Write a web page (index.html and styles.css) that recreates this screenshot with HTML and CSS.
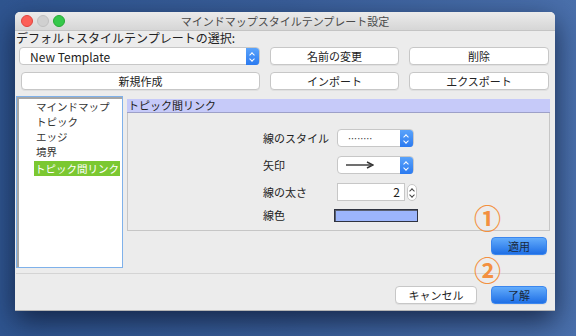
FILE: index.html
```html
<!DOCTYPE html>
<html lang="ja">
  <head>
    <meta charset="UTF-8" />
    <title>マインドマップスタイルテンプレート設定</title>
    <link rel="stylesheet" href="styles.css">
  </head>
  <body>
    <div class="window">
      <div class="titlebar">
        <div class="lights">
          <span class="light red"></span>
          <span class="light gray"></span>
          <span class="light green"></span>
        </div>
        <div class="title">マインドマップスタイルテンプレート設定</div>
        <div></div>
      </div>

      <div class="content">
        <div class="select-label">デフォルトスタイルテンプレートの選択:</div>

        <div class="toolbar">
          <div class="combo wide">
            <span class="combo-text">New Template</span>
            <span class="stepper blue"></span>
          </div>
          <button class="btn">名前の変更</button>
          <button class="btn">削除</button>
          <button class="btn new-btn">新規作成</button>
          <button class="btn">インポート</button>
          <button class="btn">エクスポート</button>
        </div>

        <div class="main">
          <ul class="tree">
            <li>マインドマップ</li>
            <li>トピック</li>
            <li>エッジ</li>
            <li>境界</li>
            <li class="selected">トピック間リンク</li>
          </ul>

          <div class="right">
            <div class="panel-head">トピック間リンク</div>
            <div class="panel">
              <div class="form">
                <div class="row">
                  <label>線のスタイル</label>
                  <div class="combo small">
                    <span class="dots">········</span>
                    <span class="stepper blue"></span>
                  </div>
                </div>
                <div class="row">
                  <label>矢印</label>
                  <div class="combo small">
                    <span class="arrow">
                      <svg width="28" height="8" viewBox="0 0 28 8">
                        <path d="M0 4 H25" stroke="#333" stroke-width="1.4" />
                        <path d="M21 1 L27 4 L21 7" fill="none" stroke="#333" stroke-width="1.4" />
                      </svg>
                    </span>
                    <span class="stepper blue"></span>
                  </div>
                </div>
                <div class="row">
                  <label>線の太さ</label>
                  <div class="spinner">
                    <span class="spin-field">2</span>
                    <span class="stepper white"></span>
                  </div>
                </div>
                <div class="row color-row">
                  <label>線色</label>
                  <span class="swatch"></span>
                </div>
              </div>
            </div>
            <div class="apply-row">
              <button class="btn primary">適用</button>
            </div>
          </div>
        </div>

        <div class="footer">
          <button class="btn cancel">キャンセル</button>
          <button class="btn primary">了解</button>
        </div>
      </div>

      <span class="mark mark-1">①</span>
      <span class="mark mark-2">②</span>
    </div>
  </body>
</html>
```

FILE: styles.css
```css
* {
  margin: 0;
  padding: 0;
  box-sizing: border-box;
}

body {
  font-family: "Noto Sans CJK JP", "Noto Sans", sans-serif;
  font-size: 12px;
  color: #222;
  width: 576px;
  height: 336px;
  overflow: hidden;
  background: linear-gradient(90deg, #2f5590 0%, #3a5f9a 50%, #4a70ac 100%);
}

.window {
  position: relative;
  margin: 12px 0 0 15px;
  width: 540px;
  height: 299px;
  background: #ececec;
  border-radius: 5px 5px 0 0;
  box-shadow: 0 10px 28px rgba(10, 20, 45, 0.75);
  border-bottom: 1px solid #b5b5b5;
}

/* title bar */
.titlebar {
  display: grid;
  grid-template-columns: 1fr auto 1fr;
  align-items: center;
  height: 19px;
  background: linear-gradient(#ebebeb, #d6d6d6);
  border-bottom: 1px solid #c4c4c4;
  border-radius: 5px 5px 0 0;
}

.lights {
  display: flex;
  gap: 4px;
  padding-left: 6px;
}

.light {
  width: 12px;
  height: 12px;
  border-radius: 50%;
}

.red {
  background: #fc5f57;
  border: 1px solid #e0443e;
}

.gray {
  background: #d0d0d0;
  border: 1px solid #c0c0c0;
}

.green {
  background: #35c84a;
  border: 1px solid #27aa35;
}

.title {
  font-size: 11px;
  color: #4a4a4a;
}

/* content */
.content {
  padding: 0 0 0 1px;
}

.select-label {
  height: 15px;
  line-height: 14px;
  font-size: 12px;
  color: #222;
}

.toolbar {
  display: grid;
  grid-template-columns: 241px 129px 140px;
  grid-template-rows: 18px 18px;
  column-gap: 10px;
  row-gap: 7px;
  margin: 1px 0 0 3px;
}

.btn {
  font-family: inherit;
  font-size: 11px;
  color: #222;
  background: #fff;
  border: 1px solid #c7c7c7;
  border-radius: 4px;
  box-shadow: 0 1px 0 rgba(0, 0, 0, 0.05);
  line-height: 16px;
}

.new-btn {
  margin-left: 2px;
}

.combo {
  display: flex;
  align-items: center;
  justify-content: space-between;
  background: #fff;
  border: 1px solid #c7c7c7;
  border-radius: 4px;
  height: 18px;
}

.combo-text {
  padding-left: 10px;
  font-size: 12px;
  color: #222;
}

.stepper {
  position: relative;
  width: 13px;
  height: 17px;
  border-radius: 0 3px 3px 0;
}

.stepper.blue {
  background: linear-gradient(#5aa3fb, #2b7af0);
}

.stepper::before,
.stepper::after {
  content: "";
  position: absolute;
  left: 4px;
  width: 3px;
  height: 3px;
  border-left: 1px solid #fff;
  border-top: 1px solid #fff;
}

.stepper::before {
  top: 5px;
  transform: rotate(45deg);
}

.stepper::after {
  top: 9px;
  transform: rotate(-135deg);
}

.stepper.white {
  width: 10px;
  height: 17px;
  background: #fff;
  border: 1px solid #c7c7c7;
  border-radius: 5px;
}

.stepper.white::before,
.stepper.white::after {
  left: 2px;
  border-color: #444;
}

.stepper.white::before {
  top: 4px;
}

.stepper.white::after {
  top: 8px;
}

/* main area */
.main {
  display: flex;
  gap: 4px;
  margin-top: 6px;
  height: 172px;
}

.tree {
  list-style: none;
  width: 107px;
  height: 172px;
  background: #fff;
  border: 1px solid #7fb1ea;
  box-shadow: inset 2px 2px 0 #a6a6a6;
  padding: 2px 0 0 17px;
  white-space: nowrap;
}

.tree li {
  height: 15px;
  line-height: 15px;
  font-size: 10.5px;
  color: #333;
  padding-left: 2px;
}

.tree li.selected {
  display: inline-block;
  background: #7bc831;
  color: #fff;
  padding: 0 1px;
}

.right {
  width: 423px;
  padding-top: 3px;
}

.panel-head {
  height: 14px;
  line-height: 13px;
  background: #c6caf9;
  border-bottom: 1px solid #9da0c8;
  font-size: 11px;
  color: #222;
  padding-left: 1px;
}

.panel {
  height: 118px;
  border: 1px solid #c6c6c6;
  border-top: none;
  padding: 16px 0 0 135px;
}

.form {
  display: flex;
  flex-direction: column;
  gap: 9px;
}

.row {
  display: flex;
  align-items: center;
  height: 18px;
}

.row label {
  width: 74px;
  font-size: 11px;
  color: #222;
}

.combo.small {
  width: 77px;
}

.dots {
  padding-left: 9px;
  font-size: 9px;
  letter-spacing: -2px;
  color: #333;
}

.arrow {
  display: flex;
  padding-left: 8px;
}

.spinner {
  display: flex;
  align-items: center;
  gap: 2px;
}

.spin-field {
  width: 68px;
  height: 18px;
  background: #fff;
  border: 1px solid #c7c7c7;
  text-align: right;
  padding-right: 4px;
  line-height: 16px;
  font-size: 12px;
}

.color-row {
  margin-top: -4px;
}

.color-row label {
  width: 71px;
}

.swatch {
  width: 84px;
  height: 13px;
  background: #9cb5fb;
  border: 1px solid #2f3340;
  box-shadow: inset 1px 1px 0 #5a6070;
}

.apply-row {
  display: flex;
  justify-content: flex-end;
  padding: 6px 3px 0 0;
}

.primary {
  width: 56px;
  height: 18px;
  background: linear-gradient(#63acfb, #1f6fe6);
  border: 1px solid #3b86ee;
  color: #1a2a40;
}

.footer {
  display: flex;
  justify-content: flex-end;
  gap: 14px;
  margin-top: 5px;
  border-top: 1px solid #d4d4d4;
  padding: 12px 8px 0 0;
}

.cancel {
  width: 82px;
  height: 18px;
}

/* annotations */
.mark {
  position: absolute;
  font-size: 27px;
  line-height: 27px;
  font-weight: 700;
  color: #f39040;
}

.mark-1 {
  left: 459px;
  top: 192px;
}

.mark-2 {
  left: 459px;
  top: 244px;
}
```
